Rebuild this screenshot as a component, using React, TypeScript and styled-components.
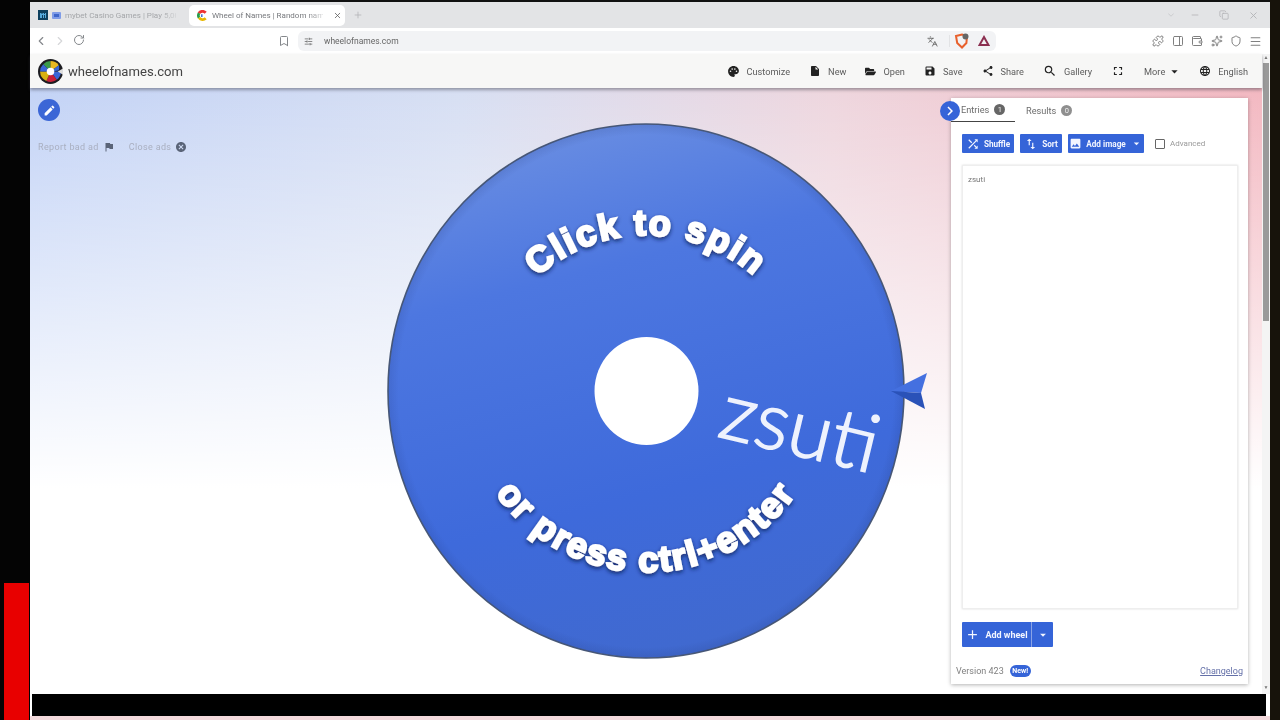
import React from 'react';
import styled, { createGlobalStyle } from 'styled-components';
import { ChevronLeft, ChevronRight, RotateCw, Bookmark, Languages, Puzzle, PanelRight, Wallet, Sparkles, Shield, Menu, Plus, X, Minus, Copy, ChevronDown, SlidersHorizontal } from 'lucide-react';
import { MdPalette, MdInsertDriveFile, MdSave, MdShare, MdSearch, MdFullscreen, MdArrowDropDown, MdLanguage, MdShuffle, MdImage, MdAdd, MdFlag, MdCancel, MdEdit, MdChevronRight, MdSwapVert } from 'react-icons/md';
import { FaFolderOpen } from 'react-icons/fa';

const Global = createGlobalStyle`
  html, body { margin: 0; padding: 0; background: #000; overflow: hidden; }
  #root { width: 1280px; height: 720px; }
  * { box-sizing: border-box; }
`;

const Screen = styled.div`
  width: 1280px; height: 720px; display: flex; background: #050302; overflow: hidden;
  font-family: Roboto, "Liberation Sans", sans-serif; filter: blur(0.55px);
`;
const LeftEdge = styled.div`
  width: 30px; flex: none; display: flex; flex-direction: column; justify-content: flex-end; align-items: flex-end;
  background: #040404;
`;
const RedBlock = styled.div`
  width: 25px; height: 137px; margin-right: 1px; background: #e80000;
`;
const Browser = styled.div`
  width: 1240px; flex: none; display: flex; flex-direction: column; padding-top: 2px; background: #fff;
  box-shadow: inset 0 2px 0 #111;
`;
const TabStrip = styled.div`
  height: 26px; flex: none; display: flex; align-items: center; background: #e3e4e6; padding-left: 8px;
`;
const Tab = styled.div<{ $active?: boolean }>`
  width: ${p => (p.$active ? 156 : 151)}px; height: 21px; flex: none; display: flex; align-items: center; gap: 4px;
  padding-left: ${p => (p.$active ? 8 : 0)}px; border-radius: 5px; font-size: 8px; white-space: nowrap;
  background: ${p => (p.$active ? '#fff' : 'transparent')}; color: ${p => (p.$active ? '#77797d' : '#a4a6a9')};
`;
const TabTitle = styled.span`
  width: 111px; flex: none; -webkit-mask-image: linear-gradient(90deg, #000 85%, rgba(0,0,0,0.25) 100%); mask-image: linear-gradient(90deg, #000 85%, rgba(0,0,0,0.25) 100%);
`;
const TabClose = styled.span`
  display: flex; margin-left: 6px; color: #555;
`;
const NewTab = styled.span`
  display: flex; margin-left: 8px; color: #b5b6b9;
`;
const WindowControls = styled.div`
  display: flex; align-items: center; gap: 19px; margin-left: auto; padding-right: 11px; color: #b4b5b8;
`;
const CollapseChevron = styled(ChevronDown)`
  margin-right: -5px; opacity: 0.6;
`;
const ChromeBar = styled.div`
  height: 26px; flex: none; display: flex; align-items: center; background: #fff; color: #777;
`;
const NavButton = styled.span<{ $dim?: boolean }>`
  width: 19px; display: flex; justify-content: center; flex: none; color: ${p => (p.$dim ? '#d6d7d9' : '#85888c')};
`;
const NavGroup = styled.div`
  display: flex; padding-left: 1px;
`;
const BookmarkButton = styled(NavButton)`
  margin-left: 186px; margin-right: 5px;
`;
const AddressBar = styled.div`
  width: 698px; height: 20px; flex: none; display: flex; align-items: center; background: #f2f3f5; border-radius: 6px;
  padding: 0 6px 0 6px; gap: 11px; font-size: 8.5px; color: #666;
`;
const AddressIcons = styled.div`
  margin-left: auto; display: flex; align-items: center; gap: 8px;
`;
const Divider = styled.span`
  width: 1px; height: 12px; background: #e2e3e5; margin: 0 -4px 0 3px;
`;
const ChromeTools = styled.div`
  margin-left: auto; display: flex; gap: 0; padding-right: 5px;
`;
const ToolSlot = styled.span`
  width: 19.4px; display: flex; justify-content: center; color: #808080;
`;
const PageRow = styled.div`
  height: 640px; flex: none; display: flex;
`;
const PageCol = styled.div`
  width: 1232px; flex: none; display: flex; flex-direction: column;
`;
const SiteHeader = styled.header`
  height: 34px; flex: none; display: flex; align-items: center; background: #f7f7f6; padding: 0 14px 0 8px;
  box-shadow: 0 2px 3px rgba(60, 60, 70, 0.45); position: relative; z-index: 2;
`;
const Brand = styled.div`
  display: flex; align-items: center; gap: 5px; font-size: 13.1px; color: #444;
`;
const Nav = styled.nav`
  margin-left: auto; display: flex; align-items: center; gap: 19px;
`;
const NavItem = styled.span<{ $gap?: number; $tight?: boolean }>`
  display: flex; align-items: center; gap: ${p => p.$gap ?? 7}px; font-size: 9.2px; color: #5c5c5c; white-space: nowrap;
  margin-left: ${p => (p.$tight ? -2 : 0)}px;
  svg { color: #222; flex: none; }
`;
const Main = styled.main`
  flex: 1; min-height: 0; display: grid; grid-template-columns: 350px 571px 297px 14px;
  background:
    linear-gradient(180deg, rgba(255,255,255,0) 0%, rgba(255,255,255,0.5) 33%, #fff 66%),
    linear-gradient(90deg, #c3d3f6 0%, #d7dff3 35%, #eed6de 65%, #f3b8c1 100%);
`;
const AdColumn = styled.div`
  padding: 11px 8px; display: flex; flex-direction: column; align-items: flex-start;
`;
const EditButton = styled.div`
  width: 22px; height: 22px; border-radius: 50%; background: #3b66d6; color: #fff; display: flex; align-items: center; justify-content: center;
`;
const AdLinks = styled.div`
  margin-top: 20px; display: flex; gap: 14px; font-size: 9px; color: #a9afc0; letter-spacing: 0.35px;
`;
const AdLink = styled.span`
  display: flex; align-items: center; gap: 4px;
  svg { color: #5a6478; }
`;
const WheelSvg = styled.svg`
  display: block; width: 571px; height: 606px;
`;
const Panel = styled.section`
  position: relative; margin: 10px 0; height: 586px; background: #fff; display: flex; flex-direction: column;
  padding: 0 5px 0 5px; box-shadow: 0 1px 4px rgba(0,0,0,0.3);
`;
const CollapseButton = styled.div`
  position: absolute; left: -11px; top: 3px; width: 20px; height: 20px; border-radius: 50%; background: #3564d8; color: #fff;
  display: flex; align-items: center; justify-content: center;
`;
const Tabs = styled.div`
  height: 24px; flex: none; display: flex; margin-left: -5px; font-size: 9.2px; color: #6c6c6c;
`;
const PanelTab = styled.div<{ $active?: boolean }>`
  display: flex; align-items: center; gap: 5px; height: 24px;
  width: ${p => (p.$active ? '64px' : 'auto')}; padding-left: ${p => (p.$active ? 10 : 11)}px;
  border-bottom: ${p => (p.$active ? '1px solid #444' : '0')};
`;
const Badge = styled.span<{ $light?: boolean }>`
  width: 11px; height: 11px; border-radius: 50%; background: ${p => (p.$light ? '#8f8f8f' : '#666')}; color: #eee; font-size: 7.5px;
  display: flex; align-items: center; justify-content: center;
`;
const Actions = styled.div`
  margin: 12px 0 0 6px; display: flex; align-items: center; gap: 6px; flex: none;
`;
const BlueButton = styled.div<{ $w: number }>`
  width: ${p => p.$w}px; height: 19px; background: #3564d8; border-radius: 1px; color: #f2f5ff; font-size: 8.2px; font-weight: 700;
  display: flex; align-items: center; justify-content: center; gap: 4px; white-space: nowrap;
`;
const Advanced = styled.label`
  display: flex; align-items: center; gap: 5px; margin-left: 5px; font-size: 8px; color: #999;
`;
const CheckBox = styled.span`
  width: 10px; height: 10px; border: 1px solid #666; border-radius: 1px; background: #fff;
`;
const Entries = styled.div`
  margin: 12px 5px 0 6px; height: 444px; flex: none; border: 1px solid #eee; box-shadow: 0 0 2px rgba(0,0,0,0.15);
  padding: 9px 5px; font-size: 8px; color: #777;
`;
const SplitButton = styled.div`
  margin: 13px 0 0 6px; width: 91px; height: 25px; flex: none; display: flex; background: #3564d8; border-radius: 1px; color: #f2f5ff;
  font-size: 9px; font-weight: 700;
`;
const SplitMain = styled.div`
  width: 70px; display: flex; align-items: center; justify-content: center; gap: 5px; border-right: 1px solid #8aa3e6;
`;
const SplitCaret = styled.div`
  flex: 1; display: flex; align-items: center; justify-content: center;
`;
const Footer = styled.div`
  margin-top: 18px; display: flex; align-items: center; font-size: 9px; color: #808080;
`;
const NewBadge = styled.span`
  margin-left: 6px; width: 21px; height: 12px; border-radius: 6px; background: #3564d8; color: #fff; font-size: 7px; font-weight: 700;
  display: flex; align-items: center; justify-content: center;
`;
const Changelog = styled.a`
  margin-left: auto; color: #6470a8; text-decoration: underline;
`;
const Scrollbar = styled.div`
  width: 8px; flex: none; background: #f4f4f4; display: flex; flex-direction: column; align-items: center; color: #777; font-size: 5px; line-height: 6px;
`;
const ScrollThumb = styled.div`
  width: 6px; height: 258px; margin-top: 3px; background: #9a9a9a;
`;
const ScrollDown = styled.span`
  margin-top: auto; margin-bottom: 4px;
`;
const BlackBar = styled.div`
  height: 22px; flex: none; margin: 0 4px 0 2px; background: #000;
`;
const BottomStrip = styled.div`
  flex: 1; background: #f3d9dc;
`;
const RightEdge = styled.div`
  flex: 1; background: #17130b;
`;
const SpinLabel = styled.text`
  font-family: "Liberation Sans", Arial, sans-serif; font-weight: 700; fill: #fff; stroke: #fff; stroke-width: 2.4px; letter-spacing: 1.9px;
`;
const NameLabel = styled.text`
  font-family: Lato, "Open Sans", sans-serif; font-weight: 300; fill: #eef2fd; stroke: #eef2fd; stroke-width: 1.6px; font-size: 80px;
`;

const TabFavicon = () => (
  <svg width="11" height="11" viewBox="0 0 24 24" fill="none" strokeWidth="6">
    <path d="M19 6A9.5 9.5 0 0 0 4 7" stroke="#e33" />
    <path d="M4.5 7a9.5 9.5 0 0 0 0 10" stroke="#2a9d4a" />
    <path d="M4.5 17A9.5 9.5 0 0 0 19 18" stroke="#e8b800" />
    <path d="M9 12h3" stroke="#36c" />
  </svg>
);
const CasinoIcons = () => (
  <>
    <svg width="10" height="10" viewBox="0 0 10 10"><rect width="10" height="10" fill="#0d3f5e" /><path d="M2 8V3h1.5v1h1V3H6v1h1V3h1v5H7V5H6v3H5V5H4v3z" fill="#5ad" /></svg>
    <svg width="9" height="7" viewBox="0 0 9 7"><rect width="9" height="7" rx="1" fill="#7f9ce8" /><rect x="2" y="2" width="5" height="3" fill="#3f66c9" /></svg>
  </>
);
const BraveShield = () => (
  <svg width="16" height="16" viewBox="0 0 16 16">
    <path d="M2 3l6-1.5L13 3l-.6 7L8 14.5 3.2 10z" fill="none" stroke="#e8602c" strokeWidth="2" />
    <circle cx="11.5" cy="3.5" r="3" fill="#666" />
  </svg>
);
const BatTriangle = () => (
  <svg width="12" height="12" viewBox="0 0 12 12"><path d="M6 2l4.5 8h-9z" fill="none" stroke="#8b2f50" strokeWidth="2" /></svg>
);
const Logo = () => (
  <svg width="25" height="25" viewBox="0 0 24 24">
    <circle cx="12" cy="12" r="12" fill="#1c1c20" />
    <path d="M12 12L5 5A10 10 0 0 1 12 2z" fill="#3a9a4a" />
    <path d="M12 12V2a10 10 0 0 1 8 4z" fill="#e8b820" />
    <path d="M12 12L20 6a10 10 0 0 1 0 5z" fill="#3a66d6" />
    <path d="M12 12h10a10 10 0 0 1-4 8z" fill="#3a66d6" />
    <path d="M12 12l6 8a10 10 0 0 1-10 1z" fill="#c8203a" />
    <path d="M12 12l-4 9A10 10 0 0 1 2 12z" fill="#d8b010" />
    <path d="M12 12H2A10 10 0 0 1 5 5z" fill="#3a66d6" />
    <circle cx="12" cy="12" r="3.6" fill="#fff" />
    <path d="M24 9l-5 3 5 3z" fill="#ddd" />
  </svg>
);

const Wheel = () => (
  <WheelSvg viewBox="380 88 571 606">
    <defs>
      <linearGradient id="disc" x1="0.3" y1="0" x2="0.55" y2="1">
        <stop offset="0" stopColor="#6a8ee2" />
        <stop offset="0.28" stopColor="#4d77e0" />
        <stop offset="0.7" stopColor="#3e6adb" />
        <stop offset="1" stopColor="#4069cf" />
      </linearGradient>
      <radialGradient id="rim" cx="0.5" cy="0.5" r="0.5">
        <stop offset="0.96" stopColor="#1d2f6a" stopOpacity="0" />
        <stop offset="1" stopColor="#1d2f6a" stopOpacity="0.14" />
      </radialGradient>
      <filter id="soft" x="-10%" y="-10%" width="120%" height="120%">
        <feDropShadow dx="0" dy="2" stdDeviation="2" floodColor="#0c1d55" floodOpacity="0.85" />
      </filter>
      <path id="topArc" d="M486 391A160 156 0 0 1 806 391" />
      <path id="bottomArc" d="M464 391A182 181 0 0 0 828 391" />
    </defs>
    <ellipse cx="646" cy="391" rx="258" ry="267" fill="url(#disc)" stroke="#4a5a78" strokeWidth="1.6" />
    <ellipse cx="646" cy="391" rx="258" ry="267" fill="url(#rim)" />
    <ellipse cx="646.5" cy="391" rx="52" ry="54" fill="#fff" />
    <SpinLabel fontSize="36" textAnchor="middle" filter="url(#soft)">
      <textPath href="#topArc" startOffset="50%">Click to spin</textPath>
    </SpinLabel>
    <SpinLabel fontSize="36" textAnchor="middle" filter="url(#soft)">
      <textPath href="#bottomArc" startOffset="50%">or press ctrl+enter</textPath>
    </SpinLabel>
    <NameLabel transform="translate(716 436) rotate(13.5)">zsuti</NameLabel>
    <path d="M891 391L927 373L921 393z" fill="#4470e0" />
    <path d="M891 391L921 393L925 409z" fill="#2a52b8" />
  </WheelSvg>
);

export default function App() {
  return (
    <>
      <Global />
      <Screen>
        <LeftEdge><RedBlock /></LeftEdge>
        <Browser>
          <TabStrip>
            <Tab><CasinoIcons /><TabTitle>mybet Casino Games | Play 5,00</TabTitle></Tab>
            <Tab $active><TabFavicon /><TabTitle>Wheel of Names | Random nam</TabTitle><TabClose><X size={9} /></TabClose></Tab>
            <NewTab><Plus size={10} /></NewTab>
            <WindowControls>
              <CollapseChevron size={10} /><Minus size={10} /><Copy size={10} /><X size={11} />
            </WindowControls>
          </TabStrip>
          <ChromeBar>
            <NavGroup>
              <NavButton><ChevronLeft size={14} /></NavButton>
              <NavButton $dim><ChevronRight size={14} /></NavButton>
              <NavButton><RotateCw size={12} /></NavButton>
            </NavGroup>
            <BookmarkButton><Bookmark size={12} /></BookmarkButton>
            <AddressBar>
              <SlidersHorizontal size={9} />
              <span>wheelofnames.com</span>
              <AddressIcons>
                <Languages size={11} />
                <Divider />
                <BraveShield />
                <BatTriangle />
              </AddressIcons>
            </AddressBar>
            <ChromeTools>
              <ToolSlot><Puzzle size={12} /></ToolSlot>
              <ToolSlot><PanelRight size={12} /></ToolSlot>
              <ToolSlot><Wallet size={12} /></ToolSlot>
              <ToolSlot><Sparkles size={12} /></ToolSlot>
              <ToolSlot><Shield size={12} /></ToolSlot>
              <ToolSlot><Menu size={13} /></ToolSlot>
            </ChromeTools>
          </ChromeBar>
          <PageRow>
            <PageCol>
              <SiteHeader>
                <Brand><Logo />wheelofnames.com</Brand>
                <Nav>
                  <NavItem><MdPalette size={13} />Customize</NavItem>
                  <NavItem><MdInsertDriveFile size={12} />New</NavItem>
                  <NavItem><FaFolderOpen size={11} />Open</NavItem>
                  <NavItem><MdSave size={12} />Save</NavItem>
                  <NavItem><MdShare size={12} />Share</NavItem>
                  <NavItem><MdSearch size={14} />Gallery</NavItem>
                  <NavItem><MdFullscreen size={14} /></NavItem>
                  <NavItem $gap={2}>More<MdArrowDropDown size={15} /></NavItem>
                  <NavItem $tight><MdLanguage size={12} />English</NavItem>
                </Nav>
              </SiteHeader>
              <Main>
                <AdColumn>
                  <EditButton><MdEdit size={13} /></EditButton>
                  <AdLinks>
                    <AdLink>Report bad ad <MdFlag size={12} /></AdLink>
                    <AdLink>Close ads <MdCancel size={12} /></AdLink>
                  </AdLinks>
                </AdColumn>
                <Wheel />
                <Panel>
                  <CollapseButton><MdChevronRight size={18} /></CollapseButton>
                  <Tabs>
                    <PanelTab $active>Entries <Badge>1</Badge></PanelTab>
                    <PanelTab>Results <Badge $light>0</Badge></PanelTab>
                  </Tabs>
                  <Actions>
                    <BlueButton $w={52}><MdShuffle size={14} />Shuffle</BlueButton>
                    <BlueButton $w={42}><MdSwapVert size={14} />Sort</BlueButton>
                    <BlueButton $w={76}><MdImage size={13} />Add image<MdArrowDropDown size={13} /></BlueButton>
                    <Advanced><CheckBox />Advanced</Advanced>
                  </Actions>
                  <Entries>zsuti</Entries>
                  <SplitButton>
                    <SplitMain><MdAdd size={15} />Add wheel</SplitMain>
                    <SplitCaret><MdArrowDropDown size={14} /></SplitCaret>
                  </SplitButton>
                  <Footer>Version 423<NewBadge>New!</NewBadge><Changelog>Changelog</Changelog></Footer>
                </Panel>
                <div />
              </Main>
            </PageCol>
            <Scrollbar>
              <span>▲</span>
              <ScrollThumb />
              <ScrollDown>▼</ScrollDown>
            </Scrollbar>
          </PageRow>
          <BlackBar />
          <BottomStrip />
        </Browser>
        <RightEdge />
      </Screen>
    </>
  );
}
